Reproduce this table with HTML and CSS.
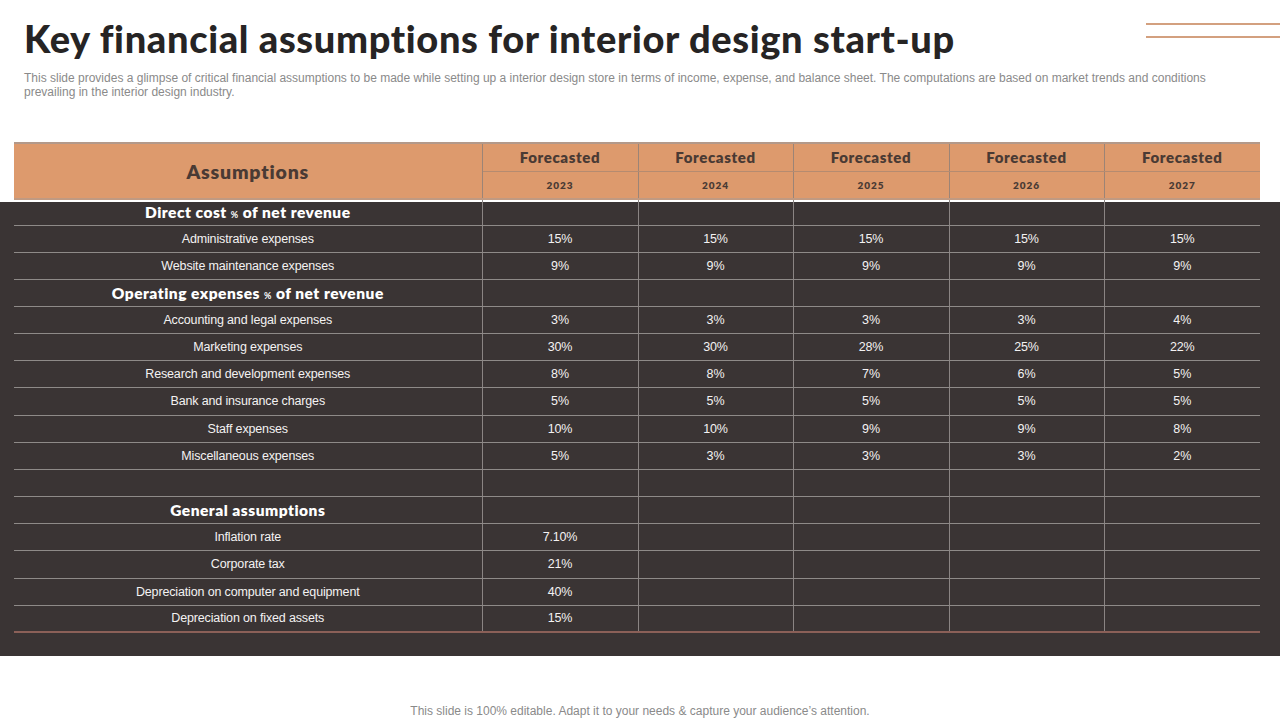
FILE: index.html
```html
<!DOCTYPE html>
<html lang="en">
<head>
<meta charset="utf-8">
<title>Key financial assumptions for interior design start-up</title>
<link rel="stylesheet" href="styles.css">
</head>
<body>
<header class="top">
  <div class="heading">
    <h1 class="title">Key financial assumptions for interior design start-up</h1>
    <p class="subtitle">This slide provides a glimpse of critical financial assumptions to be made while setting up a interior design store in terms of income, expense, and balance sheet. The computations are based on market trends and conditions<br>prevailing in the interior design industry.</p>
  </div>
  <div class="deco"><span></span><span></span></div>
</header>

<section class="band">
  <table class="grid">
    <colgroup>
      <col class="c-label"><col class="c-num"><col class="c-num2"><col class="c-num"><col class="c-num2"><col class="c-num">
    </colgroup>
    <thead>
      <tr class="h1">
        <th rowspan="2" class="assump">Assumptions</th>
        <th>Forecasted</th><th>Forecasted</th><th>Forecasted</th><th>Forecasted</th><th>Forecasted</th>
      </tr>
      <tr class="h2">
        <th>2023</th><th>2024</th><th>2025</th><th>2026</th><th>2027</th>
      </tr>
    </thead>
    <tbody>
      <tr class="sec first"><td>Direct cost <small>%</small> of net revenue</td><td></td><td></td><td></td><td></td><td></td></tr>
      <tr><td>Administrative expenses</td><td>15%</td><td>15%</td><td>15%</td><td>15%</td><td>15%</td></tr>
      <tr><td>Website maintenance expenses</td><td>9%</td><td>9%</td><td>9%</td><td>9%</td><td>9%</td></tr>
      <tr class="sec"><td>Operating expenses <small>%</small> of net revenue</td><td></td><td></td><td></td><td></td><td></td></tr>
      <tr><td>Accounting and legal expenses</td><td>3%</td><td>3%</td><td>3%</td><td>3%</td><td>4%</td></tr>
      <tr><td>Marketing expenses</td><td>30%</td><td>30%</td><td>28%</td><td>25%</td><td>22%</td></tr>
      <tr><td>Research and development expenses</td><td>8%</td><td>8%</td><td>7%</td><td>6%</td><td>5%</td></tr>
      <tr class="tall"><td>Bank and insurance charges</td><td>5%</td><td>5%</td><td>5%</td><td>5%</td><td>5%</td></tr>
      <tr><td>Staff expenses</td><td>10%</td><td>10%</td><td>9%</td><td>9%</td><td>8%</td></tr>
      <tr><td>Miscellaneous expenses</td><td>5%</td><td>3%</td><td>3%</td><td>3%</td><td>2%</td></tr>
      <tr><td></td><td></td><td></td><td></td><td></td><td></td></tr>
      <tr class="sec"><td>General assumptions</td><td></td><td></td><td></td><td></td><td></td></tr>
      <tr><td>Inflation rate</td><td>7.10%</td><td></td><td></td><td></td><td></td></tr>
      <tr class="tall"><td>Corporate tax</td><td>21%</td><td></td><td></td><td></td><td></td></tr>
      <tr><td>Depreciation on computer and equipment</td><td>40%</td><td></td><td></td><td></td><td></td></tr>
      <tr class="last"><td>Depreciation on fixed assets</td><td>15%</td><td></td><td></td><td></td><td></td></tr>
    </tbody>
  </table>
</section>

<footer class="foot">This slide is 100% editable. Adapt it to your needs &amp; capture your audience’s attention.</footer>
</body>
</html>
```

FILE: styles.css
```css
* { box-sizing: border-box; }
html, body { margin: 0; padding: 0; }
body {
  width: 1280px;
  height: 720px;
  background: #ffffff;
  font-family: "Liberation Sans", Arial, sans-serif;
  overflow: hidden;
}

.top {
  display: flex;
  align-items: flex-start;
  padding-left: 24px;
}
.heading { flex: 1; min-width: 0; }
.title {
  margin: 16px 0 0 0;
  font-family: Lato, "DejaVu Sans", sans-serif;
  font-weight: 900;
  font-size: 38px;
  line-height: 44px;
  color: #262424;
  letter-spacing: 0.65px;
  white-space: nowrap;
}
.subtitle {
  margin: 11px 0 0 0;
  font-size: 12px;
  line-height: 14px;
  color: #8a8a8a;
  letter-spacing: 0;
  white-space: nowrap;
}
.deco {
  flex: 0 0 134px;
  width: 134px;
  margin-top: 23px;
  display: flex;
  flex-direction: column;
  gap: 11px;
}
.deco span {
  display: block;
  height: 2px;
  background: #d3a07f;
}

.band {
  margin-top: 43px;
  padding: 0 20px 23px 14px;
  background: linear-gradient(to bottom, #ffffff 60px, #3a3434 60px);
}

.grid {
  width: 1246px;
  border-collapse: collapse;
  table-layout: fixed;
}
.c-label { width: 468px; }
.c-num { width: 156px; }
.c-num2 { width: 155px; }

.grid th {
  background: #dd9a6d;
  color: #4a3a34;
  font-family: Lato, "DejaVu Sans", sans-serif;
  font-weight: 800;
  padding: 0;
  text-align: center;
  border-left: 1px solid #9c8476;
  border-right: 1px solid #9c8476;
}
.grid th:first-child { border-left: none; }
.grid th:last-child { border-right: none; }
.h1 th {
  height: 28px;
  font-size: 15px;
  letter-spacing: 0.6px;
  border-top: 2px solid #b3998a;
  border-bottom: 1px solid #b58b70;
}
.h1 th.assump {
  font-size: 19.5px;
  letter-spacing: 0.8px;
  border-bottom: 2px solid #c09a82;
}
.h2 th {
  height: 28px;
  font-size: 10px;
  letter-spacing: 1px;
  border-bottom: 2px solid #c09a82;
}

.grid td {
  height: 27px;
  padding: 0;
  text-align: center;
  color: #f4f2f2;
  font-size: 12.5px;
  letter-spacing: -0.15px;
  border-bottom: 1px solid #8e8a88;
  border-left: 1px solid #8a8483;
}
.grid td:first-child { border-left: none; }
.grid tr.first td { height: 26px; }
.grid tr.tall td { height: 28px; }
.grid tr.last td { border-bottom: 2px solid #8b6058; }
.grid tr.sec td:first-child {
  font-family: Lato, "DejaVu Sans", sans-serif;
  font-weight: 800;
  font-size: 15.5px;
  letter-spacing: 0.5px;
  color: #ffffff;
}
.grid tr.sec small {
  font-size: 9px;
  font-weight: 700;
}

.foot {
  margin-top: 48px;
  text-align: center;
  font-size: 12px;
  color: #8a8a8a;
  letter-spacing: 0;
}
```
